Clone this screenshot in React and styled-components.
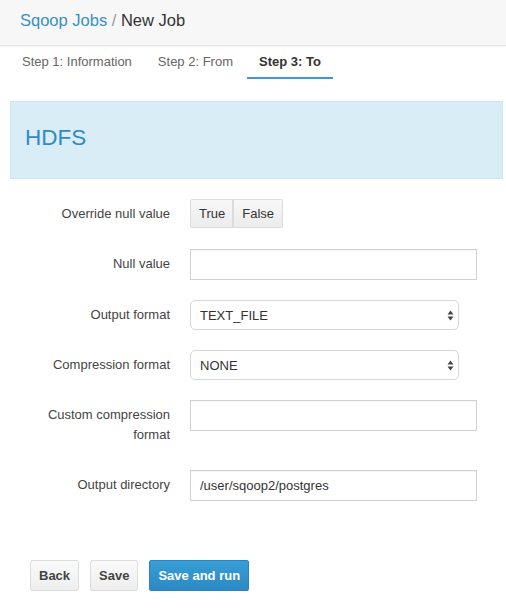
import React from "react";
import styled, { createGlobalStyle } from "styled-components";

const Global = createGlobalStyle`
  html, body { margin: 0; padding: 0; background: #fff; }
  body { font-family: "Liberation Sans", Arial, sans-serif; color: #333; }
  * { box-sizing: border-box; }
`;

const Page = styled.div`
  width: 506px;
  min-height: 615px;
  background: #fff;
`;

const Header = styled.div`
  height: 46px;
  padding: 10px 20px 0;
  background: #f7f7f7;
  border-bottom: 1px solid #e6e6e6;
  box-shadow: 0 1px 2px rgba(0, 0, 0, 0.05);
  font-size: 16.5px;
  line-height: 20px;
`;

const Crumb = styled.a`
  color: #3790c8;
  text-decoration: none;
`;

const Sep = styled.span`
  color: #999;
`;

const Current = styled.span`
  color: #333;
`;

const Tabs = styled.div`
  display: flex;
  padding-left: 10px;
`;

const Tab = styled.div`
  padding: 8px 12px 7px;
  margin-right: 2px;
  font-size: 13px;
  line-height: 16px;
  color: ${(p) => (p.$active ? "#333" : "#666")};
  font-weight: ${(p) => (p.$active ? "bold" : "normal")};
  border-bottom: 2px solid ${(p) => (p.$active ? "#3a9ad9" : "transparent")};
`;

const Panel = styled.div`
  margin: 22px 3px 0 10px;
  height: 78px;
  padding: 23px 14px 0;
  background: #d9edf7;
  border: 1px solid #c9e7f4;
`;

const PanelTitle = styled.h3`
  margin: 0;
  font-size: 22.5px;
  line-height: 26px;
  font-weight: normal;
  color: #3389c2;
`;

const Form = styled.div`
  margin-top: 20px;
`;

const Row = styled.div`
  display: grid;
  grid-template-columns: 170px auto;
  column-gap: 20px;
  align-items: start;
  min-height: 31px;
  margin-bottom: ${(p) => (p.$tight ? "19px" : "20px")};
`;

const Label = styled.label`
  text-align: right;
  font-size: 13px;
  line-height: 20px;
  padding: 5px 0 6px;
  color: #444;
`;

const Toggle = styled.div`
  display: flex;
  width: max-content;
`;

const ToggleBtn = styled.button`
  height: 29px;
  padding: 0 8px;
  font-family: inherit;
  font-size: 13px;
  color: #333;
  background: linear-gradient(#f8f8f8, #ececec);
  border: 1px solid #dcdcdc;
  border-left-width: ${(p) => (p.$first ? "1px" : "0")};
  border-radius: ${(p) => (p.$first ? "2px 0 0 2px" : "0 2px 2px 0")};
  box-shadow: ${(p) => (p.$first ? "inset -1px 0 0 #dcdcdc" : "none")};
`;

const TextInput = styled.input`
  width: 287px;
  height: 31px;
  padding: 0 9px;
  font-family: inherit;
  font-size: 13px;
  color: #333;
  border: 1px solid #d2d2d2;
  border-radius: 0;
  box-shadow: inset 0 1px 1px rgba(0, 0, 0, 0.05);
  outline: none;
`;

const SelectWrap = styled.div`
  position: relative;
  width: 269px;
  height: 30px;
`;

const Select = styled.select`
  appearance: none;
  -webkit-appearance: none;
  width: 100%;
  height: 100%;
  padding: 0 9px;
  font-family: inherit;
  font-size: 13px;
  color: #333;
  background: #fff;
  border: 1px solid #d6d6d6;
  border-radius: 5px;
  outline: none;
`;

const Arrows = styled.svg`
  position: absolute;
  right: 4px;
  top: 10px;
  pointer-events: none;
`;

const Actions = styled.div`
  display: flex;
  gap: 11px;
  padding: 40px 0 0 30px;
`;

const Btn = styled.button`
  height: 31px;
  padding: 0 8px;
  font-family: inherit;
  font-size: 13px;
  font-weight: bold;
  border-radius: 2px;
  color: ${(p) => (p.$primary ? "#fff" : "#444")};
  background: ${(p) =>
    p.$primary ? "linear-gradient(#389dd6, #2c89c3)" : "linear-gradient(#fafafa, #eeeeee)"};
  border: 1px solid ${(p) => (p.$primary ? "#2a85bd" : "#dddddd")};
`;

const SelectField = ({ value }) => (
  <SelectWrap>
    <Select defaultValue={value}>
      <option>{value}</option>
    </Select>
    <Arrows width="9" height="11" viewBox="0 0 9 11">
      <path d="M4.5 0.5 L7.5 4.5 L1.5 4.5 Z" fill="#444" />
      <path d="M4.5 10.5 L7.5 6.5 L1.5 6.5 Z" fill="#444" />
    </Arrows>
  </SelectWrap>
);

export default function App() {
  return (
    <Page>
      <Global />
      <Header>
        <Crumb href="#">Sqoop Jobs</Crumb>
        <Sep> / </Sep>
        <Current>New Job</Current>
      </Header>
      <Tabs>
        <Tab>Step 1: Information</Tab>
        <Tab>Step 2: From</Tab>
        <Tab $active>Step 3: To</Tab>
      </Tabs>
      <Panel>
        <PanelTitle>HDFS</PanelTitle>
      </Panel>
      <Form>
        <Row $tight>
          <Label>Override null value</Label>
          <Toggle>
            <ToggleBtn $first>True</ToggleBtn>
            <ToggleBtn>False</ToggleBtn>
          </Toggle>
        </Row>
        <Row>
          <Label>Null value</Label>
          <TextInput defaultValue="" />
        </Row>
        <Row $tight>
          <Label>Output format</Label>
          <SelectField value="TEXT_FILE" />
        </Row>
        <Row $tight>
          <Label>Compression format</Label>
          <SelectField value="NONE" />
        </Row>
        <Row $tight>
          <Label>
            Custom compression
            <br />
            format
          </Label>
          <TextInput defaultValue="" />
        </Row>
        <Row $tight>
          <Label>Output directory</Label>
          <TextInput defaultValue="/user/sqoop2/postgres" />
        </Row>
      </Form>
      <Actions>
        <Btn>Back</Btn>
        <Btn>Save</Btn>
        <Btn $primary>Save and run</Btn>
      </Actions>
    </Page>
  );
}
